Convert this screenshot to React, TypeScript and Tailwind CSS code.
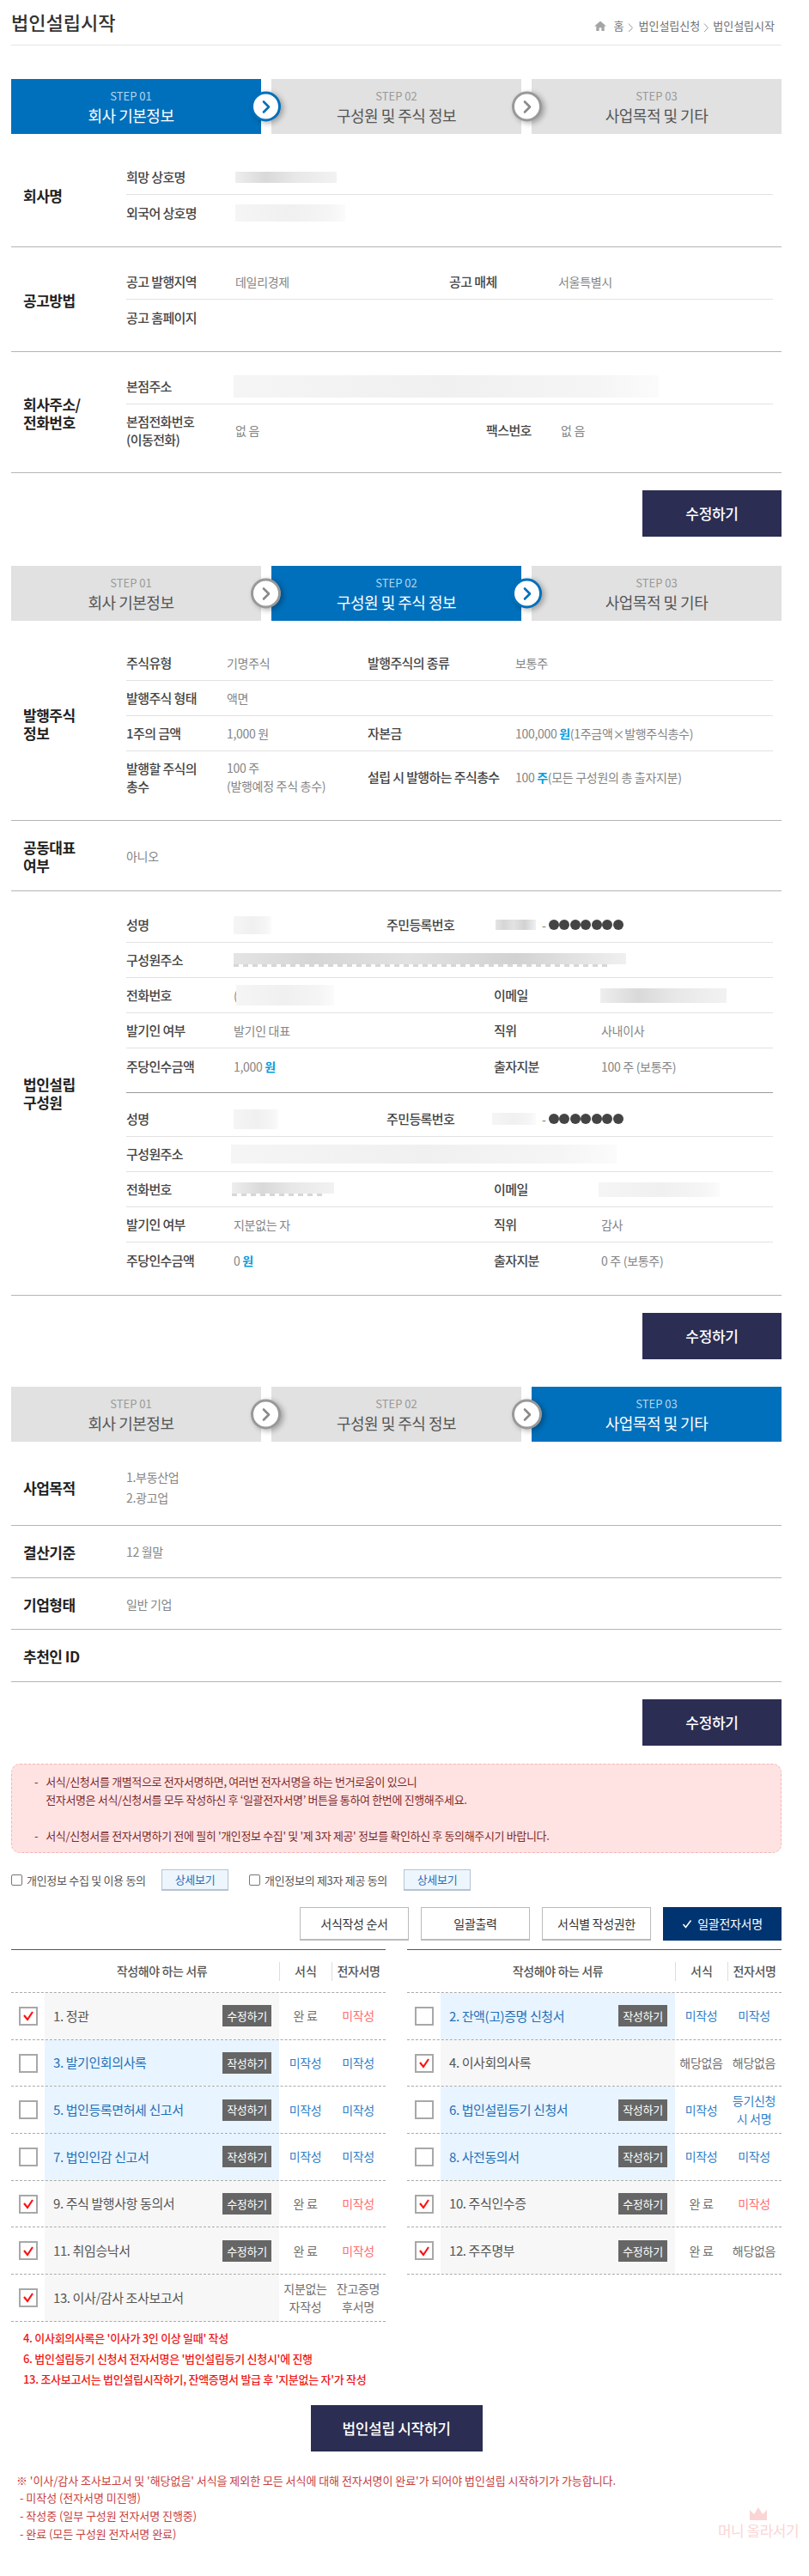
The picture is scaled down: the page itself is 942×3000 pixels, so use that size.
import React from "react";

const font = "[font-family:'Noto_Sans_CJK_KR','Noto_Sans',sans-serif]";

function Blur({ w, h, tone = "light", cls = "" }: { w: number; h: number; tone?: "light" | "mid" | "dark"; cls?: string }) {
  const toneCls =
    tone === "dark"
      ? "bg-[linear-gradient(90deg,#e4e4e4,#d6d6d6_20%,#e2e2e2_45%,#d2d2d2_72%,#f0f0f0)]"
      : tone === "mid"
      ? "bg-[linear-gradient(90deg,#eeeeee,#d9d9d9_30%,#e8e8e8_60%,#f2f2f2)]"
      : "bg-[linear-gradient(90deg,#f5f5f5,#f0f0f0_50%,#f5f5f5_85%,#fbfbfb)]";
  return <div className={`shrink-0 ${toneCls} ${cls}`} style={{ width: w, height: h }} />;
}

function Arrow({ active, left }: { active: boolean; left: string }) {
  return (
    <div
      className={`absolute top-1/2 -translate-y-1/2 ${left} z-10 flex h-[35px] w-[35px] items-center justify-center rounded-full border-[3px] bg-white shadow-[3px_2px_6px_rgba(0,0,0,0.3)] ${
        active ? "border-[#0070bc]" : "border-[#999999]"
      }`}
    >
      <svg width="12" height="16" viewBox="0 0 12 16" fill="none" className="ml-[1px]">
        <path d="M3 2 L9 8 L3 14" stroke={active ? "#0070bc" : "#8a8a8a"} strokeWidth="2.6" strokeLinecap="round" strokeLinejoin="round" />
      </svg>
    </div>
  );
}

function Steps({ active }: { active: number }) {
  const steps = [
    ["STEP 01", "회사 기본정보", "pr-[12px]"],
    ["STEP 02", "구성원 및 주식 정보", ""],
    ["STEP 03", "사업목적 및 기타", ""],
  ];
  return (
    <div className="relative flex h-[64px] w-[897px] gap-[12px]">
      {steps.map((s, i) => (
        <div
          key={s[0]}
          className={`flex w-[291px] flex-col items-center justify-center ${s[2]} ${
            i === active ? "bg-[#0070bc] text-white" : "bg-[#e1e1e1] text-[#555555]"
          }`}
        >
          <div className={`text-[13px] leading-[20px] ${i === active ? "text-[#b5d6ee]" : "text-[#999999]"}`}>{s[0]}</div>
          <div className="text-[18px] leading-[24px] tracking-[-0.5px]">{s[1]}</div>
        </div>
      ))}
      <Arrow active={active === 0} left="left-[279px]" />
      <Arrow active={active === 1} left="left-[583px]" />
    </div>
  );
}

function Lb({ children, cls = "w-[127px]" }: { children: React.ReactNode; cls?: string }) {
  return <div className={`shrink-0 text-[15px] font-medium leading-[22px] tracking-[-0.6px] text-[#444444] ${cls}`}>{children}</div>;
}
function Val({ children, cls = "" }: { children?: React.ReactNode; cls?: string }) {
  return <div className={`text-[14px] leading-[20px] tracking-[-0.3px] text-[#858585] ${cls}`}>{children}</div>;
}
function Row({ children, last, h = "h-[41px]" }: { children: React.ReactNode; last?: boolean; h?: string }) {
  return <div className={`flex items-center ${h} ${last ? "" : "border-b border-[#e2e2e2]"}`}>{children}</div>;
}
function Section({ title, children, py = "pt-[20px] pb-[19px]" }: { title: React.ReactNode; children: React.ReactNode; py?: string }) {
  return (
    <div className={`flex w-[897px] items-center border-b border-[#b5b5b5] ${py}`}>
      <div className="w-[134px] shrink-0 pl-[14px] text-[17px] font-bold leading-[21px] tracking-[-0.5px] text-[#222222]">{title}</div>
      <div className="w-[753px] shrink-0">{children}</div>
    </div>
  );
}
function EditBtn() {
  return (
    <div className="mt-[20px] flex w-[897px] justify-end">
      <div className="flex h-[54px] w-[162px] items-center justify-center bg-[#2b2d52] text-[17px] font-medium tracking-[-0.3px] text-white">수정하기</div>
    </div>
  );
}
const Blue = ({ children }: { children: React.ReactNode }) => <b className="font-bold text-[#0a9bdc]">{children}</b>;
const Dots = () => (
  <span className="ml-[7px] flex items-center">
    <span className="mr-[3px] text-[14px] text-[#777777]">-</span>
    {[0, 1, 2, 3, 4, 5, 6].map((i) => (
      <span key={i} className="mr-[0.5px] h-[12px] w-[12px] rounded-full bg-[#444444]" />
    ))}
  </span>
);
const Marks = ({ w }: { w: number }) => (
  <div
    className="h-[3px] bg-[repeating-linear-gradient(90deg,#9a9a9a_0,#9a9a9a_6px,transparent_6px,transparent_11px)] opacity-40"
    style={{ width: w }}
  />
);

type M = { name: React.ReactNode; id: React.ReactNode; addr: React.ReactNode; phone: React.ReactNode; mail: React.ReactNode; role: string; pos: string; amount: string; share: string };

function Member({ d }: { d: M }) {
  return (
    <div>
      <Row>
        <Lb>성명</Lb>
        <div className="-ml-[2px] w-[178px]">{d.name}</div>
        <Lb cls="w-[123px]">주민등록번호</Lb>
        {d.id}
        <Dots />
      </Row>
      <Row>
        <Lb>구성원주소</Lb>
        {d.addr}
      </Row>
      <Row>
        <Lb>전화번호</Lb>
        <div className="-ml-[2px] w-[303px]">{d.phone}</div>
        <Lb cls="w-[125px]">이메일</Lb>
        {d.mail}
      </Row>
      <Row>
        <Lb>발기인 여부</Lb>
        <Val cls="-ml-[2px] w-[303px]">{d.role}</Val>
        <Lb cls="w-[125px]">직위</Lb>
        <Val>{d.pos}</Val>
      </Row>
      <Row last>
        <Lb>주당인수금액</Lb>
        <Val cls="-ml-[2px] w-[303px]">
          {d.amount} <Blue>원</Blue>
        </Val>
        <Lb cls="w-[125px]">출자지분</Lb>
        <Val>{d.share}</Val>
      </Row>
    </div>
  );
}

type Doc = { name: string; on?: boolean; btn?: string; form: React.ReactNode; sign: React.ReactNode; blue?: boolean };

const pink = "text-[#ff6f6f]";
const blu = "text-[#2f80c8]";
const gray = "text-[#707070]";

function DocTable({ rows }: { rows: Doc[] }) {
  return (
    <div className="w-[436px]">
      <div className="flex h-[51px] items-center border-b border-t border-b-[#aaaaaa] border-t-[#555555] text-[14px] font-medium text-[#555555] [border-bottom-style:dashed]">
        <div className="w-[312px] pl-[39px] text-center tracking-[-0.4px]">작성해야 하는 서류</div>
        <div className="flex h-[22px] w-[61px] items-center justify-center border-l border-[#dddddd]">서식</div>
        <div className="flex h-[22px] w-[62px] items-center justify-center border-l border-[#dddddd] tracking-[-0.4px]">전자서명</div>
      </div>
      {rows.map((r) => (
        <div key={r.name} className="flex h-[54.7px] items-stretch border-b border-dashed border-[#aaaaaa]">
          <div className="flex w-[39px] shrink-0 items-center justify-center pl-[1px]">
            <div className="flex h-[22px] w-[22px] items-center justify-center border-2 border-[#a8a8a8] bg-white">
              {r.on && (
                <svg width="14" height="13" viewBox="0 0 14 13" fill="none">
                  <path d="M2 6 L6 11 L12 2" stroke="#ff1111" strokeWidth="2.2" />
                </svg>
              )}
            </div>
          </div>
          <div className={`flex w-[273px] shrink-0 items-center justify-between pl-[10px] pr-[9px] text-[15px] tracking-[-0.4px] ${r.blue ? "bg-[#e8f4ff] text-[#1f70b8]" : "bg-[#f7f7f7] text-[#555555]"}`}>
            <span>{r.name}</span>
            {r.btn && <span className="flex h-[25px] w-[57px] items-center justify-center bg-[#666666] text-[13px] tracking-[-0.3px] text-white">{r.btn}</span>}
          </div>
          <div className="flex w-[61px] shrink-0 items-center justify-center text-center text-[14px] leading-[21px] tracking-[-0.3px]">{r.form}</div>
          <div className="flex w-[62px] shrink-0 items-center justify-center text-center text-[14px] leading-[21px] tracking-[-0.3px]">{r.sign}</div>
        </div>
      ))}
    </div>
  );
}

const left: Doc[] = [
  { name: "1. 정관", on: true, btn: "수정하기", form: <span className={gray}>완 료</span>, sign: <span className={pink}>미작성</span> },
  { name: "3. 발기인회의사록", blue: true, btn: "작성하기", form: <span className={blu}>미작성</span>, sign: <span className={blu}>미작성</span> },
  { name: "5. 법인등록면허세 신고서", blue: true, btn: "작성하기", form: <span className={blu}>미작성</span>, sign: <span className={blu}>미작성</span> },
  { name: "7. 법인인감 신고서", blue: true, btn: "작성하기", form: <span className={blu}>미작성</span>, sign: <span className={blu}>미작성</span> },
  { name: "9. 주식 발행사항 동의서", on: true, btn: "수정하기", form: <span className={gray}>완 료</span>, sign: <span className={pink}>미작성</span> },
  { name: "11. 취임승낙서", on: true, btn: "수정하기", form: <span className={gray}>완 료</span>, sign: <span className={pink}>미작성</span> },
  { name: "13. 이사/감사 조사보고서", on: true, form: <span className={gray}>지분없는<br />자작성</span>, sign: <span className={gray}>잔고증명<br />후서명</span> },
];
const right: Doc[] = [
  { name: "2. 잔액(고)증명 신청서", blue: true, btn: "작성하기", form: <span className={blu}>미작성</span>, sign: <span className={blu}>미작성</span> },
  { name: "4. 이사회의사록", on: true, form: <span className={gray}>해당없음</span>, sign: <span className={gray}>해당없음</span> },
  { name: "6. 법인설립등기 신청서", blue: true, btn: "작성하기", form: <span className={blu}>미작성</span>, sign: <span className={blu}>등기신청<br />시 서명</span> },
  { name: "8. 사전동의서", blue: true, btn: "작성하기", form: <span className={blu}>미작성</span>, sign: <span className={blu}>미작성</span> },
  { name: "10. 주식인수증", on: true, btn: "수정하기", form: <span className={gray}>완 료</span>, sign: <span className={pink}>미작성</span> },
  { name: "12. 주주명부", on: true, btn: "수정하기", form: <span className={gray}>완 료</span>, sign: <span className={gray}>해당없음</span> },
];

const Chev = ({ cls = "" }: { cls?: string }) => (
  <svg width="7" height="12" viewBox="0 0 7 12" fill="none" className={`mt-[3px] ${cls}`}><path d="M1 1.5 L5.5 6.5 L1 11" stroke="#999999" strokeWidth="1" /></svg>
);

export default function App() {
  return (
    <div className={`relative h-[3000px] w-[942px] overflow-hidden bg-white pl-[13px] ${font}`}>
      {/* page head */}
      <div className="flex h-[53px] w-[897px] items-start justify-between border-b border-[#e6e6e6]">
        <h1 className="pt-[8px] text-[22px] font-medium leading-[34px] text-[#333333]">법인설립시작</h1>
        <div className="flex items-center gap-[4px] pr-[8px] pt-[20px] text-[13px] leading-[20px] text-[#707070]">
          <svg width="14" height="12" viewBox="0 0 15 13" className="mr-[5px]"><path d="M7.5 0.5 L15 7 H12.6 V13 H9 V9 H6 V13 H2.4 V7 H0 Z" fill="#a5a5a5" /></svg>
          <span>홈</span><Chev cls="mx-[1px]" /><span>법인설립신청</span><Chev /><span>법인설립시작</span>
        </div>
      </div>

      {/* step 1 */}
      <div className="pt-[39px]"><Steps active={0} /></div>
      <div className="mt-[10px]">
        <Section title="회사명">
          <Row><Lb>희망 상호명</Lb><Blur w={118} h={13} tone="mid" /></Row>
          <Row last><Lb>외국어 상호명</Lb><Blur w={128} h={20} /></Row>
        </Section>
      </div>
      <Section title="공고방법">
        <Row><Lb>공고 발행지역</Lb><Val cls="w-[249px]">데일리경제</Val><Lb>공고 매체</Lb><Val>서울특별시</Val></Row>
        <Row last><Lb>공고 홈페이지</Lb></Row>
      </Section>
      <Section title={<>회사주소/<br />전화번호</>}>
        <Row><Lb>본점주소</Lb><Blur w={495} h={26} cls="-ml-[2px]" /></Row>
        <Row last h="h-[60px]">
          <Lb><div className="leading-[21px]">본점전화번호<br />(이동전화)</div></Lb>
          <Val cls="w-[292px]">없 음</Val>
          <Lb cls="w-[87px]">팩스번호</Lb>
          <Val>없 음</Val>
        </Row>
      </Section>
      <EditBtn />

      {/* step 2 */}
      <div className="pt-[34px]"><Steps active={1} /></div>
      <div className="mt-[10px]">
        <Section title={<>발행주식<br />정보</>} py="pt-[18px] pb-[20px]">
          <Row h="h-[42px]"><Lb cls="w-[117px]">주식유형</Lb><Val cls="w-[164px]">기명주식</Val><Lb cls="w-[172px]">발행주식의 종류</Lb><Val>보통주</Val></Row>
          <Row><Lb cls="w-[117px]">발행주식 형태</Lb><Val>액면</Val></Row>
          <Row><Lb cls="w-[117px]">1주의 금액</Lb><Val cls="w-[164px]">1,000 원</Val><Lb cls="w-[172px]">자본금</Lb>
            <Val>100,000 <Blue>원</Blue><span>(1주금액×발행주식총수)</span></Val></Row>
          <Row last h="h-[60px]">
            <Lb cls="w-[117px]"><div className="leading-[21px]">발행할 주식의<br />총수</div></Lb>
            <Val cls="w-[164px] leading-[21px]">100 주<br />(발행예정 주식 총수)</Val>
            <Lb cls="w-[172px] whitespace-nowrap">설립 시 발행하는 주식총수</Lb>
            <Val>100 <Blue>주</Blue><span>(모든 구성원의 총 출자지분)</span></Val>
          </Row>
        </Section>
      </div>
      <Section title={<>공동대표<br />여부</>}>
        <Val>아니오</Val>
      </Section>
      <Section title={<>법인설립<br />구성원</>} py="pt-[19px] pb-[20px]">
        <Member
          d={{
            name: <Blur w={44} h={21} />,
            id: <Blur w={47} h={12} tone="dark" cls="ml-[4px]" />,
            addr: (
              <div className="-ml-[2px] flex flex-col">
                <Blur w={457} h={13} tone="dark" />
                <Marks w={440} />
              </div>
            ),
            phone: (
              <div className="flex items-center">
                <Val cls="w-[3px]">(</Val>
                <Blur w={114} h={24} />
              </div>
            ),
            mail: <Blur w={147} h={17} tone="mid" cls="-ml-[1px]" />,
            role: "발기인 대표",
            pos: "사내이사",
            amount: "1,000",
            share: "100 주 (보통주)",
          }}
        />
        <div className="mt-[10px] border-t border-[#999999] pt-[10px]">
          <Member
            d={{
              name: <Blur w={52} h={23} />,
              id: <Blur w={51} h={14} />,
              addr: <Blur w={449} h={22} cls="-ml-[5px]" />,
              phone: (
                <div className="-ml-[2px] flex flex-col">
                  <Blur w={119} h={13} tone="mid" />
                  <Marks w={105} />
                </div>
              ),
              mail: <Blur w={141} h={17} cls="-ml-[3px]" />,
              role: "지분없는 자",
              pos: "감사",
              amount: "0",
              share: "0 주 (보통주)",
            }}
          />
        </div>
      </Section>
      <EditBtn />

      {/* step 3 */}
      <div className="pt-[32px]"><Steps active={2} /></div>
      <div className="mt-[10px]">
        <Section title="사업목적" py="pt-[19px] pb-[20px]">
          <Val cls="leading-[24px]">1.부동산업<br />2.광고업</Val>
        </Section>
      </div>
      <Section title="결산기준" py="pt-[20px] pb-[19px]"><Val cls="h-[21px]">12 월말</Val></Section>
      <Section title="기업형태" py="pt-[20px] pb-[18px]"><Val cls="h-[21px]">일반 기업</Val></Section>
      <Section title="추천인 ID" py="pt-[20px] pb-[19px]"><Val cls="h-[21px]" /></Section>
      <EditBtn />

      {/* notice */}
      <div className="mt-[21px] flex h-[104px] w-[897px] flex-col justify-center rounded-[10px] border border-dashed border-[#f5b5b5] bg-[#ffe3e3] pl-[26px] text-[13px] leading-[21px] tracking-[-0.35px] text-[#7d2a2a]">
        <div className="flex gap-[9px]"><span>-</span><div>서식/신청서를 개별적으로 전자서명하면, 여러번 전자서명을 하는 번거로움이 있으니<br />전자서명은 서식/신청서를 모두 작성하신 후 ‘일괄전자서명’ 버튼을 통하여 한번에 진행해주세요.</div></div>
        <div className="mt-[21px] flex gap-[9px]"><span>-</span><div>서식/신청서를 전자서명하기 전에 필히 '개인정보 수집' 및 '제 3자 제공' 정보를 확인하신 후 동의해주시기 바랍니다.</div></div>
      </div>

      {/* agree */}
      <div className="mt-[19px] flex h-[25px] items-center text-[13px] tracking-[-0.3px] text-[#555555]">
        <span className="h-[13px] w-[13px] rounded-[2px] border border-[#767676]" />
        <span className="ml-[5px] w-[157px]">개인정보 수집 및 이용 동의</span>
        <span className="flex h-[25px] w-[78px] items-center justify-center border border-b-2 border-[#b5c3d2] bg-[#eef6fd] text-[#2a6db5]">상세보기</span>
        <span className="ml-[24px] h-[13px] w-[13px] rounded-[2px] border border-[#767676]" />
        <span className="ml-[5px] w-[162px]">개인정보의 제3자 제공 동의</span>
        <span className="flex h-[25px] w-[78px] items-center justify-center border border-b-2 border-[#b5c3d2] bg-[#eef6fd] text-[#2a6db5]">상세보기</span>
      </div>

      {/* actions */}
      <div className="mt-[19px] flex w-[897px] justify-end gap-[14px] text-[14px] tracking-[-0.3px] text-[#333333]">
        {["서식작성 순서", "일괄출력", "서식별 작성권한"].map((t) => (
          <div key={t} className="flex h-[39px] w-[127px] items-center justify-center border border-b-2 border-[#bbbbbb] bg-white">{t}</div>
        ))}
        <div className="flex h-[39px] w-[138px] items-center justify-center gap-[6px] bg-[#003471] text-white">
          <svg width="12" height="11" viewBox="0 0 12 11" fill="none"><path d="M1.5 6 L4.5 9.5 L10.5 1.5" stroke="#ffffff" strokeWidth="1.5" /></svg>
          일괄전자서명
        </div>
      </div>

      {/* tables */}
      <div className="mt-[10px] flex w-[897px] items-start justify-between">
        <DocTable rows={left} />
        <DocTable rows={right} />
      </div>

      {/* red notes */}
      <div className="mt-[7px] pl-[14px] text-[13px] font-medium leading-[24px] tracking-[-0.3px] text-[#f01515]">
        <div>4. 이사회의사록은 '이사가 3인 이상 일때' 작성</div>
        <div>6. 법인설립등기 신청서 전자서명은 '법인설립등기 신청시'에 진행</div>
        <div>13. 조사보고서는 법인설립시작하기, 잔액증명서 발급 후 '지분없는 자'가 작성</div>
      </div>

      <div className="mt-[18px] flex w-[897px] justify-center">
        <div className="flex h-[54px] w-[200px] items-center justify-center bg-[#2b2d52] text-[17px] font-medium tracking-[-0.3px] text-white">법인설립 시작하기</div>
      </div>

      <div className="mt-[24px] pl-[6px] text-[13px] leading-[20.6px] tracking-[-0.05px] text-[#c8403f]">
        <div>※ '이사/감사 조사보고서 및 '해당없음' 서식을 제외한 모든 서식에 대해 전자서명이 완료'가 되어야 법인설립 시작하기가 가능합니다.</div>
        <div className="pl-[4px]">- 미작성 (전자서명 미진행)</div>
        <div className="pl-[4px]">- 작성중 (일부 구성원 전자서명 진행중)</div>
        <div className="pl-[4px]">- 완료 (모든 구성원 전자서명 완료)</div>
      </div>

      {/* floating */}
      <div className="absolute left-[838px] top-[2920px] flex w-[90px] flex-col items-center text-[#fbd5d5]">
        <svg width="20" height="15" viewBox="0 0 20 15"><path d="M0 3 L5 8 L10 0 L15 8 L20 3 V15 H0 Z" fill="#fbd5d5" /></svg>
        <span className="whitespace-nowrap text-[17px] leading-[24px] tracking-[-0.5px]">머니 올라서기</span>
      </div>
    </div>
  );
}
